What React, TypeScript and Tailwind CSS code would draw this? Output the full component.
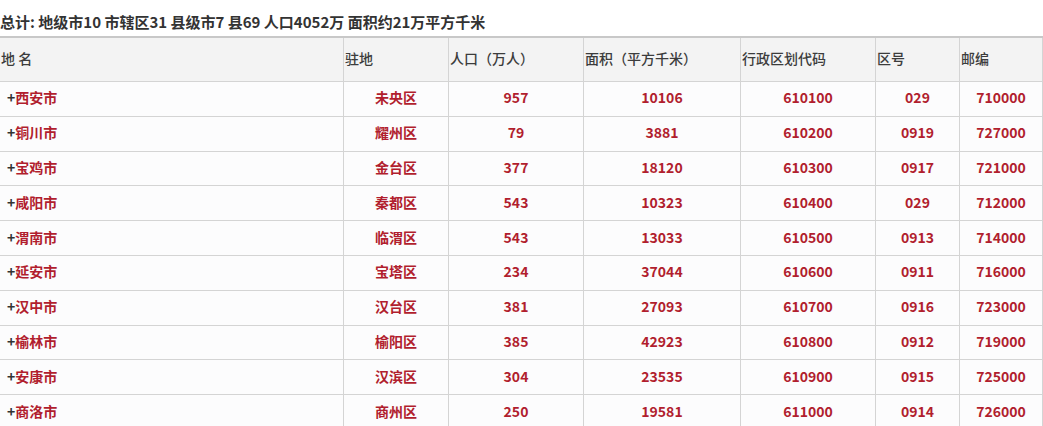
const cities = [
  { name: "西安市", seat: "未央区", pop: "957", area: "10106", code: "610100", tel: "029", zip: "710000" },
  { name: "铜川市", seat: "耀州区", pop: "79", area: "3881", code: "610200", tel: "0919", zip: "727000" },
  { name: "宝鸡市", seat: "金台区", pop: "377", area: "18120", code: "610300", tel: "0917", zip: "721000" },
  { name: "咸阳市", seat: "秦都区", pop: "543", area: "10323", code: "610400", tel: "029", zip: "712000" },
  { name: "渭南市", seat: "临渭区", pop: "543", area: "13033", code: "610500", tel: "0913", zip: "714000" },
  { name: "延安市", seat: "宝塔区", pop: "234", area: "37044", code: "610600", tel: "0911", zip: "716000" },
  { name: "汉中市", seat: "汉台区", pop: "381", area: "27093", code: "610700", tel: "0916", zip: "723000" },
  { name: "榆林市", seat: "榆阳区", pop: "385", area: "42923", code: "610800", tel: "0912", zip: "719000" },
  { name: "安康市", seat: "汉滨区", pop: "304", area: "23535", code: "610900", tel: "0915", zip: "725000" },
  { name: "商洛市", seat: "商州区", pop: "250", area: "19581", code: "611000", tel: "0914", zip: "726000" },
];

const headers = [
  { label: "地 名", w: "w-[344px]" },
  { label: "驻地", w: "w-[105px]" },
  { label: "人口（万人）", w: "w-[135px]" },
  { label: "面积（平方千米）", w: "w-[157px]" },
  { label: "行政区划代码", w: "w-[135px]" },
  { label: "区号", w: "w-[84px]" },
  { label: "邮编", w: "w-[83px]" },
];

export default function App() {
  return (
    <div
      className="w-full overflow-hidden bg-white text-[#333]"
      style={{ fontFamily: '"Noto Sans CJK SC", "Noto Sans", sans-serif' }}
    >
      <div className="pt-[12px] h-[36px] text-[15px] leading-[20px] font-bold whitespace-nowrap">
        总计: 地级市10 市辖区31 县级市7 县69 人口4052万 面积约21万平方千米
      </div>
      <table className="w-[1043px] table-fixed border-separate border-spacing-0 border-t-2 border-[#c8c8c8] text-[14px]">
        <thead>
          <tr className="bg-[#f3f3f3]">
            {headers.map((h) => (
              <th
                key={h.label}
                className={`${h.w} h-[44px] px-[1px] pb-[2px] text-left font-medium text-[#3c3c3c] border-b border-r border-[#d4d4d4] whitespace-nowrap`}
              >
                {h.label}
              </th>
            ))}
          </tr>
        </thead>
        <tbody className="bg-[#fcfcfd] font-bold text-[#b11e2e]">
          {cities.map((c) => (
            <tr key={c.name}>
              <td className="h-[34.8px] pl-[7px] pb-[2px] text-left border-b border-r border-[#d4d4d4]">
                <span className="text-[#333]">+</span>
                {c.name}
              </td>
              <td className="pb-[2px] text-center border-b border-r border-[#d4d4d4]">{c.seat}</td>
              <td className="pb-[2px] text-center border-b border-r border-[#d4d4d4]">{c.pop}</td>
              <td className="pb-[2px] text-center border-b border-r border-[#d4d4d4]">{c.area}</td>
              <td className="pb-[2px] text-center border-b border-r border-[#d4d4d4]">{c.code}</td>
              <td className="pb-[2px] text-center border-b border-r border-[#d4d4d4]">{c.tel}</td>
              <td className="pb-[2px] text-center border-b border-r border-[#d4d4d4]">{c.zip}</td>
            </tr>
          ))}
        </tbody>
      </table>
    </div>
  );
}
